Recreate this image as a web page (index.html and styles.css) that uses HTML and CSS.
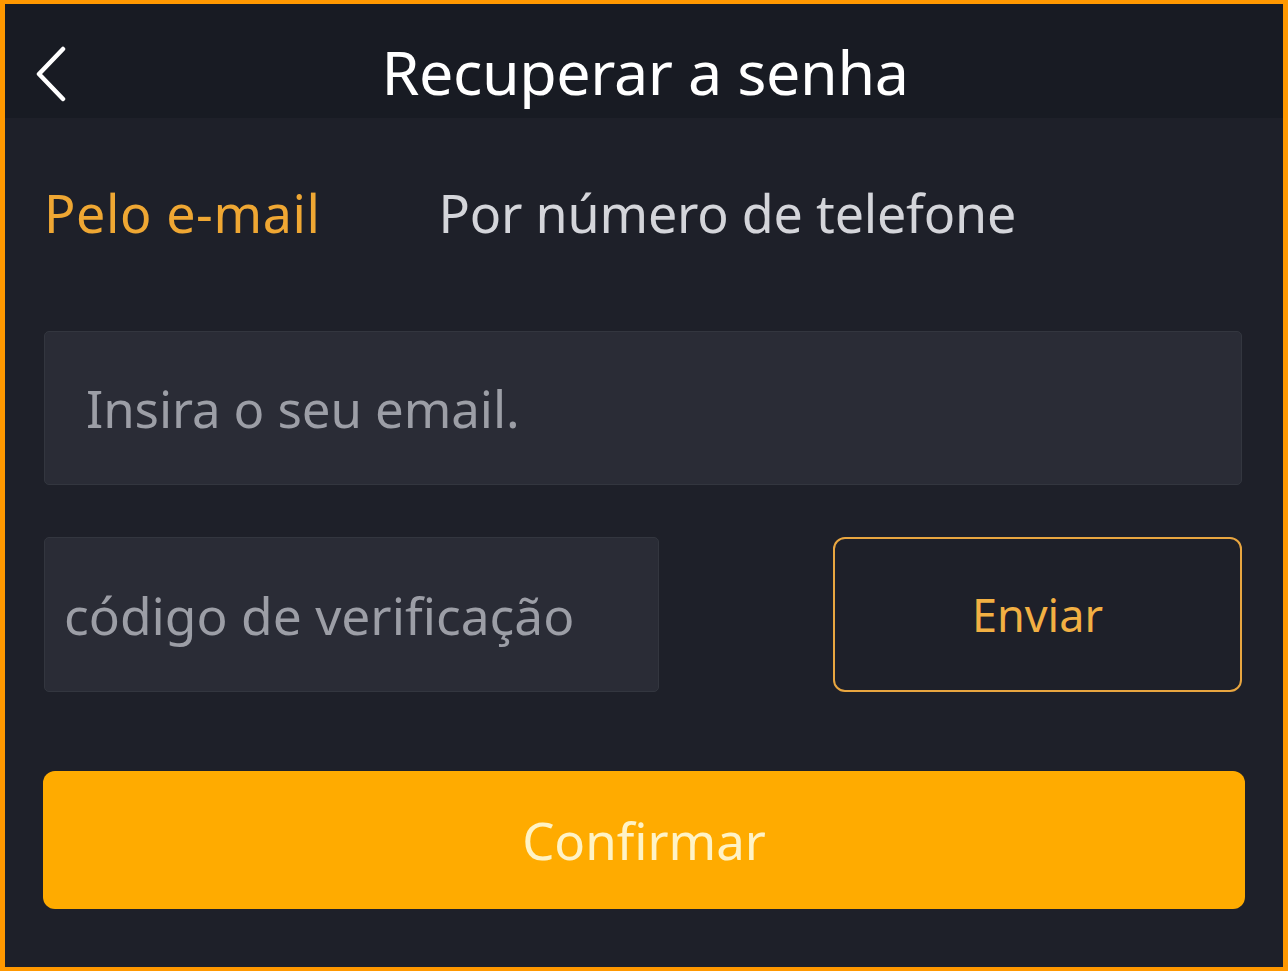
FILE: index.html
```html
<!DOCTYPE html>
<html lang="pt">
<head>
<meta charset="utf-8">
<title>Recuperar a senha</title>
<link rel="stylesheet" href="styles.css">
</head>
<body>
<div class="frame">
  <header class="topbar">
    <span class="back" aria-label="Voltar">
      <svg width="40" height="60" viewBox="0 0 40 60" fill="none">
        <path d="M27 4 L3 29 L27 54" stroke="#ffffff" stroke-width="4.5" stroke-linecap="round" stroke-linejoin="round"/>
      </svg>
    </span>
    <h1 class="title">Recuperar a senha</h1>
  </header>
  <main class="content">
    <nav class="tabs">
      <span class="tab active">Pelo e-mail</span>
      <span class="tab other">Por número de telefone</span>
    </nav>
    <div class="field email">
      <span class="placeholder">Insira o seu email.</span>
    </div>
    <div class="code-row">
      <div class="field code">
        <span class="placeholder">código de verificação</span>
      </div>
      <button class="send">Enviar</button>
    </div>
    <button class="confirm">Confirmar</button>
  </main>
</div>
</body>
</html>
```
FILE: styles.css
```css
html, body {
  margin: 0;
  padding: 0;
}
body {
  width: 1288px;
  height: 971px;
  background: #ff9800;
  font-family: "Noto Sans", "Inter", sans-serif;
  overflow: hidden;
}
.frame {
  box-sizing: border-box;
  margin: 4px 5px 4px 5px;
  width: 1278px;
  height: 963px;
  background: #1e2029;
  display: flex;
  flex-direction: column;
}
.topbar {
  height: 114px;
  background: #181b23;
  display: flex;
  align-items: center;
  justify-content: center;
  position: relative;
}
.back {
  position: absolute;
  left: 31px;
  top: 41px;
  width: 40px;
  height: 60px;
}
.back svg { display: block; }
.title {
  margin: 0;
  color: #ffffff;
  font-weight: 400;
  font-size: 61px;
  letter-spacing: -0.4px;
  line-height: 1;
  transform: translate(1px, 10px);
}
.content {
  padding: 0 41px 0 39px;
  display: flex;
  flex-direction: column;
}
.tabs {
  display: flex;
  gap: 118px;
  height: 213px;
  padding-top: 62px;
  box-sizing: border-box;
  font-size: 52px;
  line-height: 66px;
}
.tab {
  color: #d4d5da;
}
.tab.active {
  color: #efa733;
  letter-spacing: 0.6px;
}
.tab.other {
  letter-spacing: -0.2px;
}
.field {
  box-sizing: border-box;
  background: #2a2c36;
  border: 1px solid #33363f;
  border-radius: 5px;
  display: flex;
  align-items: center;
}
.placeholder {
  color: #9c9ea6;
  font-size: 51px;
  letter-spacing: -0.1px;
}
.email {
  height: 154px;
  padding-left: 41px;
}
.code-row {
  margin-top: 52px;
  display: flex;
  justify-content: space-between;
  height: 155px;
}
.code {
  width: 615px;
  padding-left: 19px;
}
.code .placeholder {
  font-size: 51.5px;
  letter-spacing: 0;
}
.send {
  box-sizing: border-box;
  width: 409px;
  height: 155px;
  background: transparent;
  border: 2px solid #e9a640;
  border-radius: 12px;
  color: #f2b043;
  font-family: inherit;
  font-size: 45px;
  padding: 0;
}
.confirm {
  margin: 79px -3px 0 -1px;
  height: 138px;
  border: none;
  border-radius: 12px;
  background: #ffab00;
  color: #fff3c6;
  font-family: inherit;
  font-size: 51px;
  padding: 0;
}
```
